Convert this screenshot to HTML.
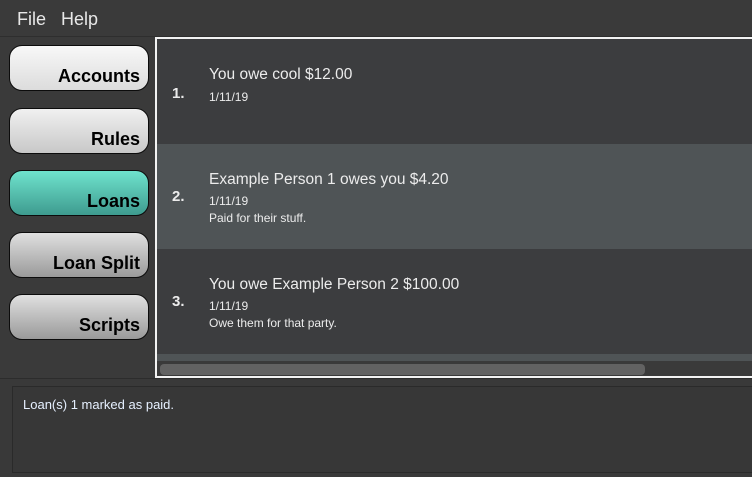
<!DOCTYPE html>
<html><head><meta charset="utf-8"><style>
*{margin:0;padding:0;box-sizing:border-box}
body{width:752px;height:477px;background:#393939;font-family:"Liberation Sans",sans-serif;position:relative;overflow:hidden}
.menu{position:absolute;left:0;top:0;width:752px;height:37px;background:#3a3a3a;border-bottom:1px solid #2e2e2e}
.menu span{position:absolute;top:9px;color:#e8e8e8;font-size:18px}
.side{position:absolute;left:0;top:37px;width:155px;height:341px;background:#3a3a3a}
.btn{position:absolute;left:9px;width:140px;height:46px;border:1.5px solid #0c0c0c;border-radius:13px;background:linear-gradient(#f8f8f8,#dcdcdc);font-weight:bold;font-size:18px;color:#000;text-align:right;padding-right:8px;padding-top:20px}
.g2{background:linear-gradient(#f0f0f0,#c8c8c8)}
.g3{background:linear-gradient(#e0e0e0,#9a9a9a)}
.teal{background:linear-gradient(#6fe3cd,#3e9b8f)}
.list{position:absolute;left:155px;top:37px;width:600px;height:341px;border:2px solid #f2f2f2;border-right:none;background:#3c3d3f;overflow:hidden}
.row{position:absolute;left:0;width:600px;height:105px;background:#3c3d3f;color:#ececec}
.row.alt{background:#4f5456}
.num{position:absolute;left:15px;font-size:15px;font-weight:bold}
.t{position:absolute;left:52px;font-size:15.5px}
.s{position:absolute;left:52px;font-size:12px}
.sb{position:absolute;left:0;top:322px;width:600px;height:17px;background:#3a3a3a}
.thumb{position:absolute;left:3px;top:3px;width:485px;height:11px;border-radius:4px;background:#626262}
.bottom{position:absolute;left:0;top:378px;width:752px;height:99px;background:#393939;border-top:1px solid #2c2c2c}
.box{position:absolute;left:12px;top:7px;width:745px;height:87px;background:#373737;border:1px solid #2a2a2a}
.box span{position:absolute;left:10px;top:10px;color:#e6f0ff;font-size:13px}
</style></head><body>
<div class="menu"><span style="left:17px">File</span><span style="left:61px">Help</span></div>
<div class="side">
<div class="btn" style="top:8px">Accounts</div>
<div class="btn g2" style="top:71px">Rules</div>
<div class="btn teal" style="top:133px">Loans</div>
<div class="btn g3" style="top:195px">Loan Split</div>
<div class="btn g3" style="top:257px">Scripts</div>
</div>
<div class="list">
<div class="row" style="top:0">
<div class="num" style="top:46px">1.</div>
<div class="t" style="top:27px">You owe cool $12.00</div>
<div class="s" style="top:51px">1/11/19</div>
</div>
<div class="row alt" style="top:105px">
<div class="num" style="top:44px">2.</div>
<div class="t" style="top:27px">Example Person 1 owes you $4.20</div>
<div class="s" style="top:50px">1/11/19</div>
<div class="s" style="top:67px">Paid for their stuff.</div>
</div>
<div class="row" style="top:210px">
<div class="num" style="top:44px">3.</div>
<div class="t" style="top:27px">You owe Example Person 2 $100.00</div>
<div class="s" style="top:50px">1/11/19</div>
<div class="s" style="top:67px">Owe them for that party.</div>
</div>
<div class="row alt" style="top:315px"></div>
<div class="sb"><div class="thumb"></div></div>
</div>
<div class="bottom"><div class="box"><span>Loan(s) 1 marked as paid.</span></div></div>
</body></html>
